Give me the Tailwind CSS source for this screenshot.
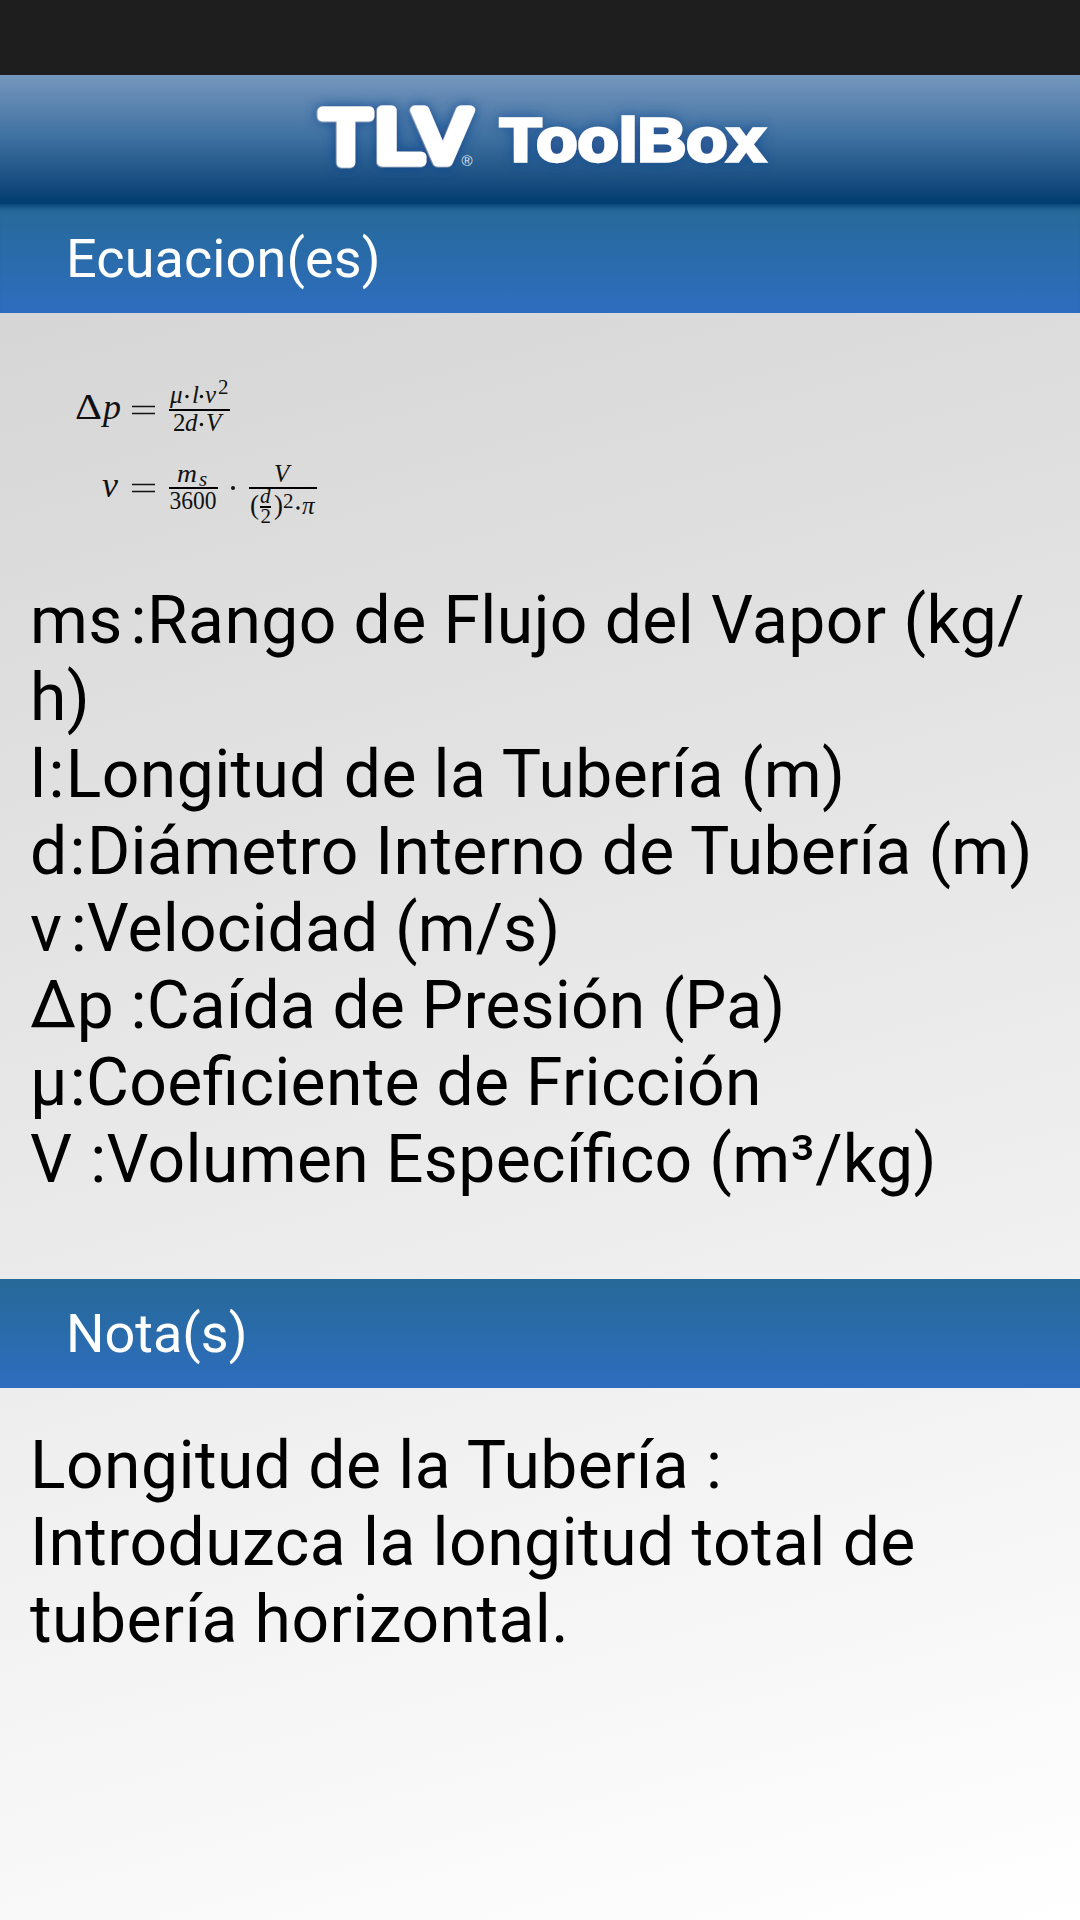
<!DOCTYPE html>
<html lang="es"><head><meta charset="utf-8"><title>TLV ToolBox</title>
<script src="https://cdn.jsdelivr.net/npm/@tailwindcss/browser@4"></script></head>
<body class="w-[1080px] h-[1920px] overflow-hidden flex flex-col text-black font-['Roboto',sans-serif] bg-linear-[165deg] from-[#cfcfcf] to-white">
<div class="h-[75px] shrink-0 bg-[#1e1e1e]"></div>
<header class="h-[129px] shrink-0 bg-linear-to-b from-[#7597be] via-[#3c6f9f] to-[#003c70]">
<svg class="block" width="1080" height="129" viewBox="0 75 1080 129">
<defs>
<filter id="glow" x="-20%" y="-40%" width="140%" height="180%"><feDropShadow dx="0" dy="0" stdDeviation="7" flood-color="#0b3f8c" flood-opacity=".7"/></filter>
<filter id="tube" x="-20%" y="-40%" width="140%" height="180%"><feDropShadow dx="-0.5" dy="0.5" stdDeviation="0.4" flood-color="#c3cad4"/><feDropShadow dx="0" dy="0" stdDeviation="7" flood-color="#0b3f8c" flood-opacity=".8"/></filter>
</defs>
<g filter="url(#tube)" fill="#fff" stroke="#fff" stroke-linejoin="round" stroke-width="9" font-family="Inter" font-size="71">
<text x="319" y="162.500" textLength="54" lengthAdjust="spacingAndGlyphs">T</text>
<text x="375" y="161.500" textLength="50" lengthAdjust="spacingAndGlyphs">L</text>
<text x="413.500" y="161.500" textLength="58.500" lengthAdjust="spacingAndGlyphs">V</text>
</g>
<text x="461.500" y="166" fill="#dbe6f2" font-family="Liberation Sans" font-size="15">®</text>
<text filter="url(#glow)" x="500" y="161" fill="#fff" stroke="#fff" stroke-width="3.500" font-family="Liberation Sans" font-weight="bold" font-size="62" textLength="265" lengthAdjust="spacingAndGlyphs">ToolBox</text>
</svg>
</header>
<h2 class="h-[109px] shrink-0 px-[66px] pt-[23px] text-[54px] leading-[64px] tracking-[0.1px] text-white bg-linear-to-b from-[#266997] to-[#2e6dbf] shadow-[inset_0_8px_6px_-6px_#003c70]">Ecuacion(es)</h2>
<section class="h-[966px] shrink-0 pl-[30px]">
<svg class="block ml-[40px] pt-[37px]" width="260" height="217" viewBox="70 350 260 180" font-family="Liberation Serif" fill="#111">
<g font-size="36"><text x="75" y="419" textLength="27" lengthAdjust="spacingAndGlyphs">Δ</text><text x="103" y="419" font-style="italic">p</text><text x="102" y="497" font-style="italic">v</text></g>
<path d="M132 406.500h23M132 413.500h23M132 484.500h23M132 491.500h23" stroke="#111" stroke-width="1.300"/>
<path d="M169 410h61M169 488h49M249 488h68M260 507h11" stroke="#000" stroke-width="2"/>
<g font-size="25"><g font-style="italic"><text x="170" y="403">μ</text><text x="192" y="403">l</text><text x="205" y="403">v</text><text x="185" y="431">d</text><text x="206" y="431">V</text><text x="177" y="482" textLength="20" lengthAdjust="spacingAndGlyphs">m</text><text x="274" y="482">V</text><text x="302" y="514">π</text></g>
<text x="173" y="431">2</text><text x="169.500" y="509" textLength="47" lengthAdjust="spacingAndGlyphs">3600</text></g>
<g font-size="21"><text x="218" y="394">2</text><text x="199" y="486" font-style="italic">s</text><text x="260" y="503" font-style="italic">d</text><text x="260.500" y="523">2</text><text x="283" y="508">2</text></g>
<g font-size="27"><text x="250" y="514">(</text><text x="274" y="514">)</text></g>
<g><circle cx="187" cy="396.500" r="1.700"/><circle cx="201.500" cy="396.500" r="1.700"/><circle cx="201.500" cy="424.500" r="1.700"/><circle cx="233" cy="488" r="2"/><circle cx="298" cy="508" r="1.700"/></g>
</svg>
<div class="pt-[52px] text-[66px] leading-[77px] whitespace-nowrap [font-feature-settings:'liga'_1]">
<p class="tracking-[0.42px]">ms<span class="-ml-[9px]"> </span>:Rango de Flujo del Vapor (kg/</p>
<p class="tracking-[0.45px]">h)</p>
<p class="tracking-[0.4px]">l<span class="ml-[2px] mr-[1px]">:</span>Longitud de la Tubería (m)</p>
<p class="tracking-[0.33px]">d<span class="ml-[2px] mr-[1px]">:</span>Diámetro Interno de Tubería (m)</p>
<p class="tracking-[0.15px]">v<span class="-ml-[8px]"> </span>:Velocidad (m/s)</p>
<p class="tracking-[0.18px]">Δp :Caída de Presión (Pa)</p>
<p class="tracking-[0.3px]">µ<span class="ml-[2px]">:</span>Coeficiente de Fricción</p>
<p class="tracking-[0.38px]">V <span class="ml-[1px]">:</span>Volumen Específico (m³/kg)</p>
</div>
</section>
<h2 class="h-[109px] shrink-0 px-[66px] pt-[23px] text-[54px] leading-[64px] text-white bg-linear-to-b from-[#266997] to-[#2e6dbf]">Nota(s)</h2>
<section class="pl-[30px] pt-[39px] text-[66px] leading-[77px] tracking-[0.45px] whitespace-nowrap">
<p>Longitud de la Tubería :</p>
<p>Introduzca la longitud total de</p>
<p>tubería horizontal.</p>
</section>
</body></html>
